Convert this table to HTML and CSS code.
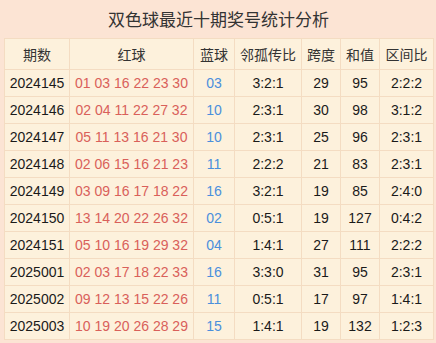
FILE: index.html
```html
<!DOCTYPE html>
<html lang="zh">
<head>
<meta charset="utf-8">
<link rel="stylesheet" href="styles.css">
</head>
<body>
<div class="panel">
  <div class="title">双色球最近十期奖号统计分析</div>
  <table class="stats">
    <colgroup>
      <col class="c1"><col class="c2"><col class="c3"><col class="c4"><col class="c5"><col class="c6"><col class="c7">
    </colgroup>
    <thead>
      <tr><th>期数</th><th>红球</th><th>蓝球</th><th>邻孤传比</th><th>跨度</th><th>和值</th><th>区间比</th></tr>
    </thead>
    <tbody>
      <tr><td>2024145</td><td class="red">01 03 16 22 23 30</td><td class="blue">03</td><td>3:2:1</td><td>29</td><td>95</td><td>2:2:2</td></tr>
      <tr><td>2024146</td><td class="red">02 04 11 22 27 32</td><td class="blue">10</td><td>2:3:1</td><td>30</td><td>98</td><td>3:1:2</td></tr>
      <tr><td>2024147</td><td class="red">05 11 13 16 21 30</td><td class="blue">10</td><td>2:3:1</td><td>25</td><td>96</td><td>2:3:1</td></tr>
      <tr><td>2024148</td><td class="red">02 06 15 16 21 23</td><td class="blue">11</td><td>2:2:2</td><td>21</td><td>83</td><td>2:3:1</td></tr>
      <tr><td>2024149</td><td class="red">03 09 16 17 18 22</td><td class="blue">16</td><td>3:2:1</td><td>19</td><td>85</td><td>2:4:0</td></tr>
      <tr><td>2024150</td><td class="red">13 14 20 22 26 32</td><td class="blue">02</td><td>0:5:1</td><td>19</td><td>127</td><td>0:4:2</td></tr>
      <tr><td>2024151</td><td class="red">05 10 16 19 29 32</td><td class="blue">04</td><td>1:4:1</td><td>27</td><td>111</td><td>2:2:2</td></tr>
      <tr><td>2025001</td><td class="red">02 03 17 18 22 33</td><td class="blue">16</td><td>3:3:0</td><td>31</td><td>95</td><td>2:3:1</td></tr>
      <tr><td>2025002</td><td class="red">09 12 13 15 22 26</td><td class="blue">11</td><td>0:5:1</td><td>17</td><td>97</td><td>1:4:1</td></tr>
      <tr><td>2025003</td><td class="red">10 19 20 26 28 29</td><td class="blue">15</td><td>1:4:1</td><td>19</td><td>132</td><td>1:2:3</td></tr>
    </tbody>
  </table>
</div>
</body>
</html>
```
FILE: styles.css
```css
html, body {
  margin: 0;
  padding: 0;
  background: #ffffff;
}
.panel {
  width: 436px;
  height: 343px;
  box-sizing: border-box;
  background: #fce4d4;
  padding: 0 3px 4px 4px;
  font-family: "Liberation Sans", "Noto Sans CJK SC", sans-serif;
  color: #222;
}
.title {
  height: 38px;
  display: flex;
  align-items: center;
  justify-content: center;
  font-size: 17px;
  color: #333;
  padding-bottom: 1px;
  box-sizing: border-box;
}
.stats {
  width: 429px;
  table-layout: fixed;
  border-collapse: collapse;
  background: #fdf1dc;
  font-size: 14px;
}
.c1 { width: 65px; }
.c2 { width: 124px; }
.c3 { width: 41px; }
.c4 { width: 67px; }
.c5 { width: 39px; }
.c6 { width: 39px; }
.c7 { width: 54px; }
.stats th, .stats td {
  border: 1px solid #f4dcc2;
  padding: 0;
  text-align: center;
  white-space: nowrap;
  overflow: hidden;
}
.stats th {
  height: 30px;
  font-weight: normal;
  color: #333;
}
.stats td {
  height: 26px;
  color: #1a1a1a;
}
.stats td.red { color: #d9605a; }
.stats td.blue { color: #4a8fdc; }
```
